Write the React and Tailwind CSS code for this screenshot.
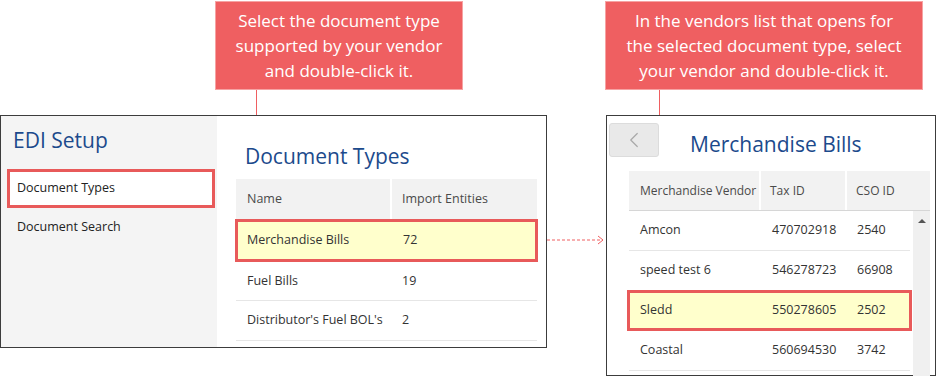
import { ChevronLeft } from "lucide-react";

const font = { fontFamily: '"Open Sans", "Noto Sans", sans-serif' };

function Callout({ className, children }) {
  return (
    <div
      className={`flex h-[89px] items-center justify-center border border-[#f6a3a3] bg-[#ef5f61] text-center text-[17px] leading-[25px] text-white ${className}`}
    >
      <div>{children}</div>
    </div>
  );
}

const docRows = [
  { name: "Fuel Bills", count: "19", h: "h-[39px]" },
  { name: "Distributor's Fuel BOL's", count: "2", h: "h-[40px]" },
];

const vendors = [
  { name: "Amcon", tax: "470702918", cso: "2540" },
  { name: "speed test 6", tax: "546278723", cso: "66908" },
  { name: "Sledd", tax: "550278605", cso: "2502", active: true },
  { name: "Coastal", tax: "560694530", cso: "3742" },
];

export default function App() {
  return (
    <div className="flex h-[376px] w-[937px] overflow-hidden bg-white" style={font}>
      {/* left group */}
      <div className="flex w-[547px] shrink-0 flex-col">
        <Callout className="ml-[215px] mt-px w-[248px]">
          Select the document type
          <br />
          supported by your vendor
          <br />
          and double-click it.
        </Callout>
        <div className="ml-[256px] h-[25px] w-px bg-[#ef5f61]" />
        <div className="flex h-[233px] border border-[#3c3c3c]">
          <div className="w-[216px] shrink-0 bg-[#f4f4f4] pt-[10px]">
            <h1 className="pl-[12px] text-[21px] leading-[29px] text-[#1c4a8c]">EDI Setup</h1>
            <div className="ml-[6px] mt-[14px] flex h-[39px] w-[208px] items-center border-[3px] border-[#e85a5a] bg-white pl-[7px] text-[12.5px] text-[#222]">
              Document Types
            </div>
            <div className="flex h-[38px] items-center pl-[16px] text-[12.5px] text-[#222]">
              Document Search
            </div>
          </div>
          <div className="flex-1 pl-[19px] pr-[9px] pt-[26px]">
            <h2 className="pl-[9px] text-[21px] leading-[29px] text-[#1c4a8c]">Document Types</h2>
            <div className="mt-[8px]">
              <div className="flex h-[40px] bg-[#f2f2f2] text-[12.5px] font-medium text-[#4a4a4a]">
                <div className="flex w-[156px] items-center border-r-2 border-white pl-[11px]">Name</div>
                <div className="flex flex-1 items-center pl-[10px]">Import Entities</div>
              </div>
              <div className="-mx-px flex h-[43px] items-center border-[3px] border-[#e85a5a] bg-[#ffffcc] text-[12.5px] text-[#333]">
                <div className="w-[155px] pl-[9px]">Merchandise Bills</div>
                <div className="pl-[10px]">72</div>
              </div>
              {docRows.map((r) => (
                <div
                  key={r.name}
                  className={`flex ${r.h} items-center border-b border-[#e6e6e6] text-[12.5px] text-[#333]`}
                >
                  <div className="w-[156px] pl-[11px]">{r.name}</div>
                  <div className="pl-[10px]">{r.count}</div>
                </div>
              ))}
            </div>
          </div>
        </div>
      </div>

      {/* arrow */}
      <div className="w-[58px] shrink-0 pt-[234px]">
        <svg width="58" height="12" viewBox="0 0 58 12">
          <line x1="0" y1="6" x2="56" y2="6" stroke="#ef5f61" strokeWidth="1" strokeDasharray="3 2" />
          <polyline points="51,2 56,6 51,10" fill="none" stroke="#ef5f61" strokeWidth="1" />
        </svg>
      </div>

      {/* right group */}
      <div className="flex w-[332px] shrink-0 flex-col">
        <Callout className="mt-px w-[318px]">
          In the vendors list that opens for
          <br />
          the selected document type, select
          <br />
          your vendor and double-click it.
        </Callout>
        <div className="ml-[54px] h-[25px] w-px bg-[#ef5f61]" />
        <div className="ml-px h-[261px] w-[330px] border border-[#3c3c3c]">
          <div className="flex items-start pl-[2px] pt-[7px]">
            <div className="flex h-[34px] w-[50px] items-center justify-center rounded-[3px] border border-[#dcdcdc] bg-[#e9e9e9]">
              <ChevronLeft size={26} strokeWidth={1.1} className="text-[#a8a8a8]" />
            </div>
            <h2 className="ml-[31px] mt-[7px] text-[21px] leading-[29px] text-[#1c4a8c]">Merchandise Bills</h2>
          </div>
          <div className="ml-[22px] mt-[12px] w-[301px]">
            <div className="flex h-[40px] border-b border-[#d6d6d6] bg-[#f2f2f2] text-[12px] font-medium text-[#4a4a4a]">
              <div className="flex w-[132px] items-center whitespace-nowrap border-r-2 border-white pl-[11px]">
                Merchandise Vendor
              </div>
              <div className="flex w-[86px] items-center border-r-2 border-white pl-[9px]">Tax ID</div>
              <div className="flex flex-1 items-center pl-[9px]">CSO ID</div>
            </div>
            <div className="flex">
              <div className="w-[281px]">
                {vendors.map((v) =>
                  v.active ? (
                    <div
                      key={v.name}
                      className="-mx-[2px] -mt-px flex h-[41px] items-center border-[3px] border-[#e85a5a] bg-[#ffffcc] text-[12.5px] text-[#333]"
                    >
                      <div className="w-[132px] pl-[10px]">{v.name}</div>
                      <div className="w-[86px] pl-[10px]">{v.tax}</div>
                      <div className="pl-[9px]">{v.cso}</div>
                    </div>
                  ) : (
                    <div
                      key={v.name}
                      className="flex h-[40px] items-center border-b border-[#e6e6e6] text-[12.5px] text-[#333]"
                    >
                      <div className="w-[132px] pl-[11px]">{v.name}</div>
                      <div className="w-[86px] pl-[11px]">{v.tax}</div>
                      <div className="pl-[10px]">{v.cso}</div>
                    </div>
                  )
                )}
              </div>
              <div className="ml-[3px] h-[170px] w-[17px] bg-[#f0f0f0] pt-[8px]">
                <div className="mx-auto h-0 w-0 border-x-[4px] border-b-[4px] border-x-transparent border-b-[#555]" />
              </div>
            </div>
          </div>
        </div>
      </div>
    </div>
  );
}
